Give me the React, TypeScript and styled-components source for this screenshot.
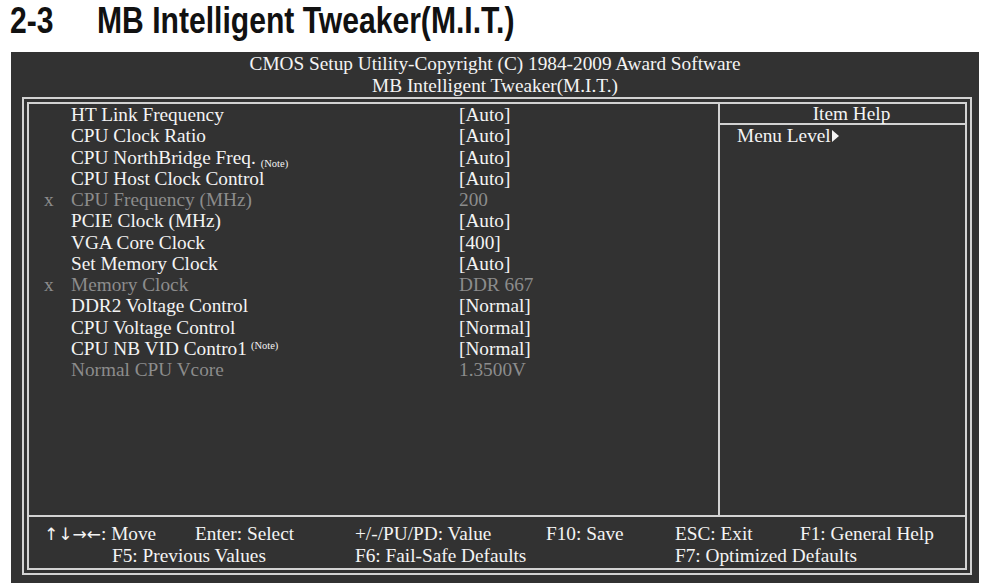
import styled, { createGlobalStyle } from 'styled-components'

interface SettingType {
  label: string
  value: string
  note?: 'sub' | 'super'
  locked?: boolean
  dim?: boolean
}

const settings: SettingType[] = [
  { label: 'HT Link Frequency', value: '[Auto]' },
  { label: 'CPU Clock Ratio', value: '[Auto]' },
  { label: 'CPU NorthBridge Freq.', value: '[Auto]', note: 'sub' },
  { label: 'CPU Host Clock Control', value: '[Auto]' },
  { label: 'CPU Frequency (MHz)', value: '200', locked: true, dim: true },
  { label: 'PCIE Clock (MHz)', value: '[Auto]' },
  { label: 'VGA Core Clock', value: '[400]' },
  { label: 'Set Memory Clock', value: '[Auto]' },
  { label: 'Memory Clock', value: 'DDR 667', locked: true, dim: true },
  { label: 'DDR2 Voltage Control', value: '[Normal]' },
  { label: 'CPU Voltage Control', value: '[Normal]' },
  { label: 'CPU NB VID Contro1', value: '[Normal]', note: 'super' },
  { label: 'Normal CPU Vcore', value: '1.3500V', dim: true },
]

const GlobalStyle = createGlobalStyle`
  body {
    margin: 0;
    background: #ffffff;
  }
`

const StyledPage = styled.div`
  width: 987px;
  height: 588px;
  overflow: hidden;
`

// no narrow face installed, so the condensed heading is squeezed by hand
const StyledTitle = styled.h1`
  display: flex;
  margin: 0;
  padding: 1px 0 0 10px;
  height: 52px;
  box-sizing: border-box;
  font-family: 'Liberation Sans', Arial, sans-serif;
  font-weight: bold;
  font-size: 36px;
  line-height: 40px;
  color: #111111;
  span {
    display: inline-block;
    transform: scaleX(0.836);
    transform-origin: left center;
    white-space: nowrap;
  }
  .titleNumber {
    flex: 0 0 87px;
  }
`

const StyledBios = styled.div`
  display: flex;
  flex-direction: column;
  margin-left: 11px;
  width: 968px;
  height: 531px;
  background: #323232;
  color: #f4f4f4;
  font-family: 'Liberation Serif', 'Times New Roman', serif;
  font-size: 19.3px;
`

const StyledHeader = styled.div`
  padding-top: 1px;
  height: 45px;
  box-sizing: border-box;
  text-align: center;
  line-height: 22px;
`

const StyledFrame = styled.div`
  flex: 1;
  display: flex;
  margin: 0 7px 8px 11px;
  padding: 3px;
  border: 2px solid #d2d2d2;
`

const StyledInner = styled.div`
  flex: 1;
  display: flex;
  flex-direction: column;
  border: 2px solid #d2d2d2;
`

const StyledMain = styled.div`
  flex: 1;
  display: flex;
`

const StyledSettingList = styled.div`
  flex: 1;
  border-right: 2px solid #d2d2d2;
`

const StyledSettingRow = styled.div<{ $dim?: boolean }>`
  display: grid;
  grid-template-columns: 27px 388px 1fr;
  padding-left: 15px;
  height: 21.25px;
  line-height: 21.25px;
  white-space: nowrap;
  color: ${({ $dim }) => ($dim ? '#8c8c8c' : '#f4f4f4')};
  .settingNote {
    margin-left: 5px;
    font-size: 10.5px;
    line-height: 0;
  }
  .settingNote.sub {
    vertical-align: -3px;
  }
  .settingNote.super {
    margin-left: 4px;
    vertical-align: 6px;
  }
`

const StyledHelp = styled.div`
  width: 245px;
  display: flex;
  flex-direction: column;
`

const StyledHelpTitle = styled.div`
  padding: 1px 0 0 18px;
  line-height: 18px;
  text-align: center;
  border-bottom: 2px solid #d2d2d2;
`

const StyledHelpLevel = styled.div`
  display: flex;
  align-items: center;
  padding-left: 17px;
  line-height: 21.25px;
  svg {
    margin-left: 1px;
  }
`

const StyledFooter = styled.div`
  height: 53px;
  box-sizing: border-box;
  padding-top: 6px;
  border-top: 2px solid #d2d2d2;
  line-height: 22px;
`

const StyledFooterRow = styled.div<{ $indent: number }>`
  display: flex;
  padding-left: ${({ $indent }) => $indent}px;
  white-space: nowrap;
  .footerArrows {
    font-family: 'DejaVu Sans', sans-serif;
    font-size: 17px;
    line-height: 0;
  }
`

const StyledFooterKey = styled.span<{ $width?: number }>`
  flex: ${({ $width }) => ($width ? `0 0 ${$width}px` : '1')};
`

export default function App() {
  return (
    <StyledPage>
      <GlobalStyle />
      <StyledTitle>
        <span className="titleNumber">2-3</span>
        <span>MB Intelligent Tweaker(M.I.T.)</span>
      </StyledTitle>
      <StyledBios>
        <StyledHeader>
          <div>CMOS Setup Utility-Copyright (C) 1984-2009 Award Software</div>
          <div>MB Intelligent Tweaker(M.I.T.)</div>
        </StyledHeader>
        <StyledFrame>
          <StyledInner>
            <StyledMain>
              <StyledSettingList>
                {settings.map((item) => (
                  <SettingRow key={item.label} {...item} />
                ))}
              </StyledSettingList>
              <StyledHelp>
                <StyledHelpTitle>Item Help</StyledHelpTitle>
                <StyledHelpLevel>
                  Menu Level
                  <svg width="7" height="12" viewBox="0 0 7 12">
                    <path d="M0 0 L7 6 L0 12 Z" fill="#f4f4f4" />
                  </svg>
                </StyledHelpLevel>
              </StyledHelp>
            </StyledMain>
            <StyledFooter>
              <StyledFooterRow $indent={15}>
                <StyledFooterKey $width={151}>
                  <span className="footerArrows">↑↓→←</span>: Move
                </StyledFooterKey>
                <StyledFooterKey $width={160}>Enter: Select</StyledFooterKey>
                <StyledFooterKey $width={191}>+/-/PU/PD: Value</StyledFooterKey>
                <StyledFooterKey $width={129}>F10: Save</StyledFooterKey>
                <StyledFooterKey $width={125}>ESC: Exit</StyledFooterKey>
                <StyledFooterKey>F1: General Help</StyledFooterKey>
              </StyledFooterRow>
              <StyledFooterRow $indent={83}>
                <StyledFooterKey $width={243}>F5: Previous Values</StyledFooterKey>
                <StyledFooterKey $width={320}>F6: Fail-Safe Defaults</StyledFooterKey>
                <StyledFooterKey>F7: Optimized Defaults</StyledFooterKey>
              </StyledFooterRow>
            </StyledFooter>
          </StyledInner>
        </StyledFrame>
      </StyledBios>
    </StyledPage>
  )
}

function SettingRow({ label, value, note, locked, dim }: SettingType) {
  return (
    <StyledSettingRow $dim={dim}>
      <span>{locked ? 'x' : ''}</span>
      <span>
        {label}
        {note && <span className={`settingNote ${note}`}>(Note)</span>}
      </span>
      <span>{value}</span>
    </StyledSettingRow>
  )
}
